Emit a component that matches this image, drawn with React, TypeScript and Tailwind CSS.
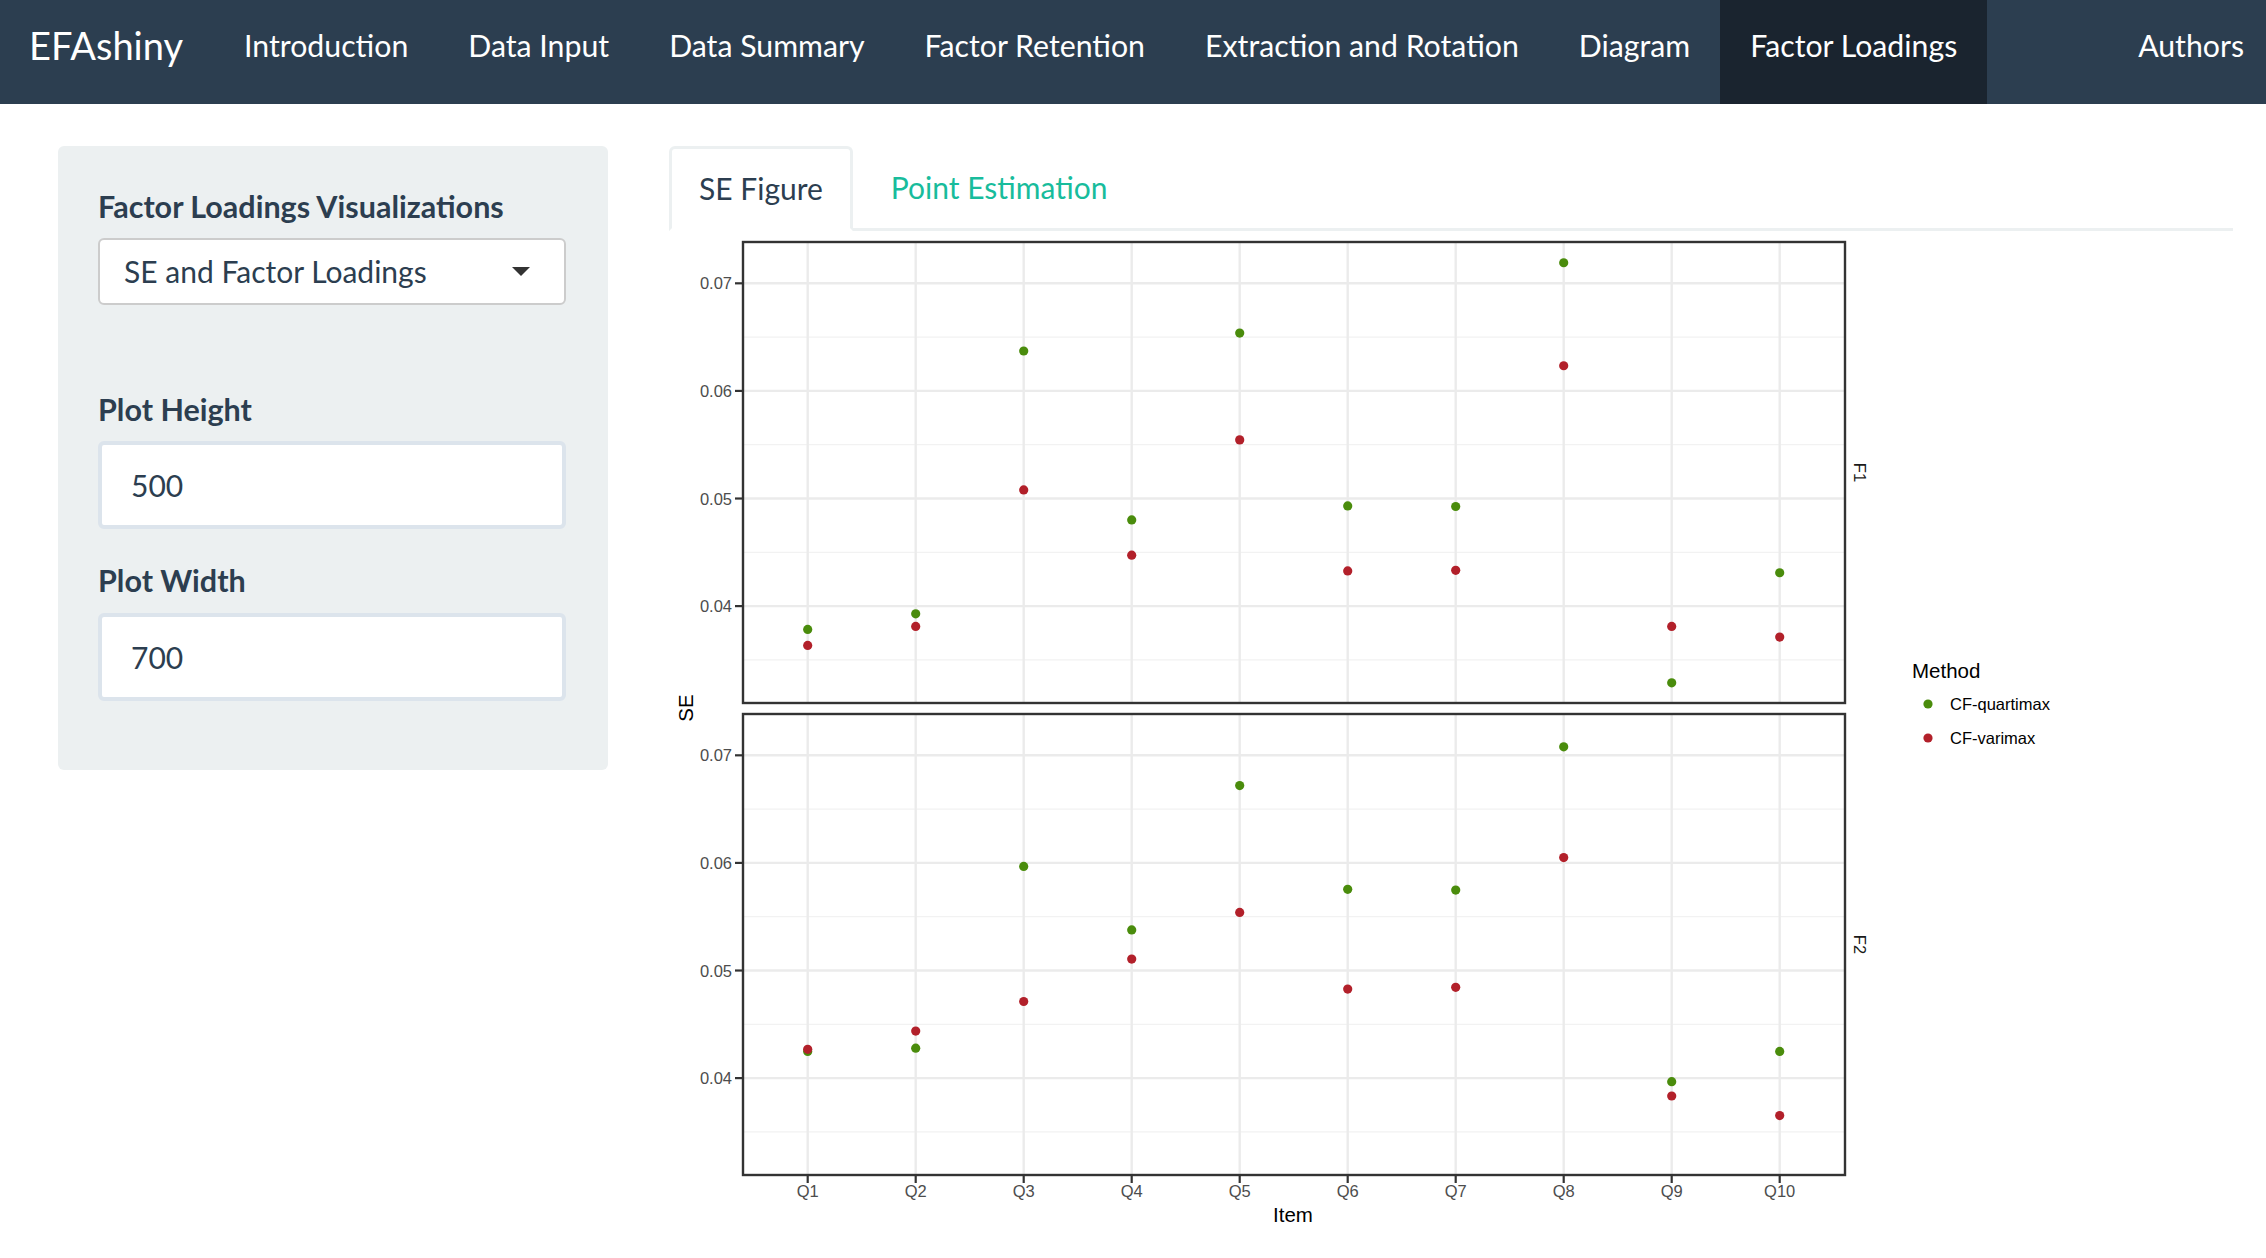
import React from 'react'

const navItems = ['Introduction', 'Data Input', 'Data Summary', 'Factor Retention', 'Extraction and Rotation', 'Diagram', 'Factor Loadings']

// SE values read off the two facets, Q1..Q10
const panels = [
  {
    label: 'F1',
    top: 242,
    bottom: 703,
    green: [0.03783, 0.03928, 0.06371, 0.04801, 0.06538, 0.04931, 0.04926, 0.07191, 0.03287, 0.0431],
    red: [0.03635, 0.03811, 0.0508, 0.04473, 0.05545, 0.04327, 0.04333, 0.06234, 0.03811, 0.03712],
  },
  {
    label: 'F2',
    top: 714,
    bottom: 1175,
    green: [0.04248, 0.04278, 0.05967, 0.05377, 0.06719, 0.05755, 0.05748, 0.07079, 0.03967, 0.04248],
    red: [0.04268, 0.04437, 0.04712, 0.05106, 0.0554, 0.04828, 0.04844, 0.0605, 0.03834, 0.03652],
  },
]

const GREEN = '#4a8c0c'
const RED = '#b2202a'
const X0 = 743
const X1 = 1845
const xs = Array.from({ length: 10 }, (_, i) => 807.7 + i * 108)
const major = [0.04, 0.05, 0.06, 0.07]
const minor = [0.035, 0.045, 0.055, 0.065]
const yOf = (top: number, v: number) => top + (0.07384 - v) * 10760

const SEPlot: React.FC = () => (
  <svg width={1400} height={1010} viewBox="669 231 1400 1010" className="block" fontFamily="'Liberation Sans', Arial, sans-serif">
    {panels.map((p) => (
      <g key={p.label}>
        <rect x={X0} y={p.top} width={X1 - X0} height={p.bottom - p.top} fill="#ffffff" />
        {minor.map((v) => (
          <line key={v} x1={X0} x2={X1} y1={yOf(p.top, v)} y2={yOf(p.top, v)} stroke="#f2f2f2" strokeWidth={1.3} />
        ))}
        {major.map((v) => (
          <line key={v} x1={X0} x2={X1} y1={yOf(p.top, v)} y2={yOf(p.top, v)} stroke="#ebebeb" strokeWidth={2.4} />
        ))}
        {xs.map((x) => (
          <line key={x} x1={x} x2={x} y1={p.top} y2={p.bottom} stroke="#ebebeb" strokeWidth={2.4} />
        ))}
        {p.green.map((v, i) => (
          <circle key={'g' + i} cx={xs[i]} cy={yOf(p.top, v)} r={4.6} fill={GREEN} />
        ))}
        {p.red.map((v, i) => (
          <circle key={'r' + i} cx={xs[i]} cy={yOf(p.top, v)} r={4.6} fill={RED} />
        ))}
        <rect x={X0} y={p.top} width={X1 - X0} height={p.bottom - p.top} fill="none" stroke="#333333" strokeWidth={2.4} />
        {major.map((v) => (
          <g key={'t' + v}>
            <line x1={X0 - 8} x2={X0} y1={yOf(p.top, v)} y2={yOf(p.top, v)} stroke="#333333" strokeWidth={2.2} />
            <text x={X0 - 11} y={yOf(p.top, v) + 6} textAnchor="end" fontSize={16.5} fill="#4d4d4d">
              {v.toFixed(2)}
            </text>
          </g>
        ))}
        <text
          x={1854}
          y={(p.top + p.bottom) / 2}
          transform={`rotate(90 1854 ${(p.top + p.bottom) / 2})`}
          textAnchor="middle"
          fontSize={16.5}
          fill="#1a1a1a"
        >
          {p.label}
        </text>
      </g>
    ))}

    {xs.map((x, i) => (
      <g key={'x' + i}>
        <line x1={x} x2={x} y1={1175} y2={1183} stroke="#333333" strokeWidth={2.2} />
        <text x={x} y={1197} textAnchor="middle" fontSize={16.5} fill="#4d4d4d">
          Q{i + 1}
        </text>
      </g>
    ))}

    <text x={1293} y={1222} textAnchor="middle" fontSize={20.5} fill="#000000">
      Item
    </text>
    <text x={693} y={708} transform="rotate(-90 693 708)" textAnchor="middle" fontSize={20.5} fill="#000000">
      SE
    </text>

    {/* legend */}
    <text x={1912} y={678} fontSize={20.5} fill="#000000">
      Method
    </text>
    <circle cx={1928} cy={704} r={4.6} fill={GREEN} />
    <text x={1950} y={710} fontSize={16.5} fill="#000000">
      CF-quartimax
    </text>
    <circle cx={1928} cy={738} r={4.6} fill={RED} />
    <text x={1950} y={744} fontSize={16.5} fill="#000000">
      CF-varimax
    </text>
  </svg>
)

const App: React.FC = () => {
  return (
    <div className="min-h-screen bg-white font-['Lato',sans-serif] text-[#2c3e50]">
      {/* Navbar */}
      <nav className="flex h-[104px] bg-[#2c3e50] text-white">
        <div className="pl-[29px] pr-[31px] pt-[22px] text-[38px] leading-[46px]">EFAshiny</div>
        {navItems.map((item) => (
          <div
            key={item}
            className={`px-[30px] pt-[25px] text-[30.25px] leading-[40px] ${item === 'Factor Loadings' ? 'bg-[#1a242f]' : ''}`}
          >
            {item}
          </div>
        ))}
        <div className="ml-auto pl-[30px] pr-[22px] pt-[25px] text-[30.25px] leading-[40px]">Authors</div>
      </nav>

      <div className="flex pl-[58px] pr-[33px] pt-[42px]">
        {/* Sidebar */}
        <div className="w-[550px] shrink-0 self-start rounded-[6px] bg-[#ecf0f1] pl-[40px] pr-[42px] pt-[40px] pb-[69px]">
          <div className="text-[30.5px] font-bold leading-[40px]">Factor Loadings Visualizations</div>
          <div className="mt-[12px] flex h-[67px] items-center justify-between rounded-[6px] border-2 border-[#cccccc] bg-white pl-[24px] pr-[34px] text-[30px] text-[#2c3e50]">
            <span>SE and Factor Loadings</span>
            <span className="h-0 w-0 border-x-[9px] border-t-[9px] border-x-transparent border-t-[#333333]" />
          </div>

          <div className="mt-[84px] text-[30.5px] font-bold leading-[40px]">Plot Height</div>
          <div className="mt-[12px] flex h-[88px] items-center rounded-[6px] border-4 border-[#dce4ec] bg-white pl-[29px] text-[30px]">
            500
          </div>

          <div className="mt-[31px] text-[30.5px] font-bold leading-[40px]">Plot Width</div>
          <div className="mt-[13px] flex h-[88px] items-center rounded-[6px] border-4 border-[#dce4ec] bg-white pl-[29px] text-[30px]">
            700
          </div>
        </div>

        {/* Main */}
        <div className="ml-[61px] min-w-0 flex-1">
          <div className="flex border-b-[3px] border-[#ecf0f1]">
            <div className="mb-[-3px] flex h-[85px] items-center rounded-t-[6px] border-[3px] border-[#ecf0f1] border-b-white bg-white px-[27px] text-[30px]">
              SE Figure
            </div>
            <div className="ml-[8px] flex h-[82px] items-center px-[30px] text-[30px] text-[#18bc9c]">Point Estimation</div>
          </div>
          <SEPlot />
        </div>
      </div>
    </div>
  )
}

export default App
